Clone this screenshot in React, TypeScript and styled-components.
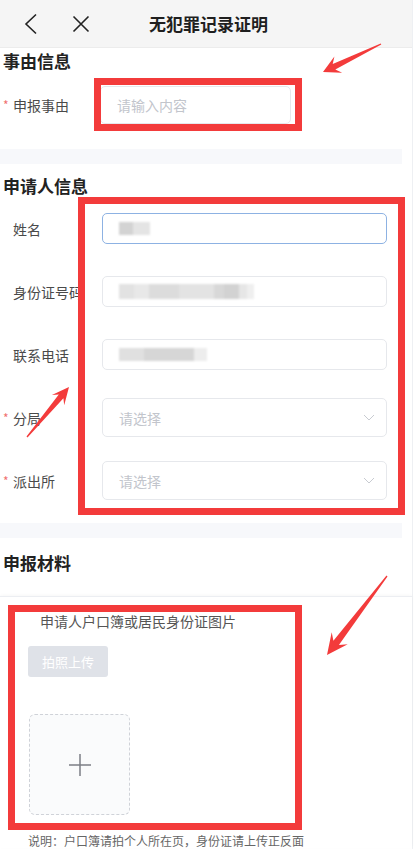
import React from 'react';
import styled, { createGlobalStyle } from 'styled-components';

const GlobalStyle = createGlobalStyle`
    html, body {
        margin: 0;
        padding: 0;
        background: #fff;
        font-family: "Noto Sans CJK SC", "Noto Sans", sans-serif;
        color: #333;
    }
`;

const Page = styled.div`
    position: relative;
    width: 417px;
    height: 849px;
    overflow: hidden;
    background: #fff;
`;

const Shell = styled.div`
    width: 412px;
    min-height: 849px;
    border-right: 1px solid #eef0f3;
`;

const NavBar = styled.div`
    height: 47px;
    background: #f5f5f5;
    border-bottom: 1px solid #ececec;
    display: flex;
    align-items: center;
    position: relative;
`;

const NavIcons = styled.div`
    display: flex;
    align-items: center;
    gap: 34px;
    padding-left: 24px;
`;

const NavTitle = styled.div`
    position: absolute;
    left: 0;
    right: -5px;
    text-align: center;
    font-size: 17px;
    font-weight: 600;
    color: #1f1f1f;
    pointer-events: none;
`;

const Section = styled.section<{ $bottom: number }>`
    padding-bottom: ${p => p.$bottom}px;
`;

const SectionTitle = styled.h2<{ $top: number; $line: number }>`
    margin: 0;
    padding: ${p => p.$top}px 0 0 3px;
    line-height: ${p => p.$line}px;
    font-size: 17px;
    font-weight: 700;
    color: #222;
`;

const Band = styled.div`
    width: 402px;
    height: 15px;
    background: #f7f8fb;
`;

const Row = styled.div<{ $h: number }>`
    height: ${p => p.$h}px;
    display: flex;
    align-items: center;
`;

const Label = styled.div<{ $w: number }>`
    width: ${p => p.$w}px;
    flex-shrink: 0;
    padding-left: 13px;
    box-sizing: border-box;
    font-size: 14px;
    color: #4a4a4a;
    white-space: nowrap;
    overflow: hidden;
`;

const Star = styled.span`
    display: inline-block;
    width: 10px;
    margin-left: -10px;
    color: #f07070;
    font-size: 12px;
    vertical-align: 1px;
`;

const Field = styled.div<{ $w: number; $h: number; $focus?: boolean }>`
    width: ${p => p.$w}px;
    height: ${p => p.$h}px;
    box-sizing: border-box;
    border: 1px solid ${p => (p.$focus ? '#8db2e3' : '#e6e8ec')};
    border-radius: 5px;
    display: flex;
    align-items: center;
    padding: 0 11px 0 16px;
    font-size: 14px;
    background: #fff;
`;

const Placeholder = styled.span`
    color: #c2c5cc;
    flex: 1;
`;

const Redaction = styled.div`
    display: flex;
    filter: blur(1px);
`;

const Blot = styled.span<{ $w: number; $shade: string; $h?: number }>`
    display: block;
    width: ${p => p.$w}px;
    height: ${p => p.$h ?? 14}px;
    background: ${p => p.$shade};
`;

const Card = styled.div`
    margin-top: 21px;
    border-top: 1px solid #eceef2;
    box-shadow: 0 -1px 3px rgba(0, 0, 0, 0.03);
    padding: 14px 0 0 28px;
    display: flex;
    flex-direction: column;
    align-items: flex-start;
`;

const MaterialLabel = styled.div`
    padding-left: 12px;
    line-height: 20px;
    font-size: 14px;
    color: #555;
`;

const UploadButton = styled.button`
    margin-top: 15px;
    width: 80px;
    height: 31px;
    border: none;
    border-radius: 3px;
    background: #dfe2e8;
    color: #fff;
    font-family: inherit;
    font-size: 13px;
    padding: 0;
`;

const UploadBox = styled.div`
    margin-top: 37px;
    margin-left: 1px;
    width: 101px;
    height: 101px;
    box-sizing: border-box;
    border: 1px dashed #cfd2d8;
    border-radius: 6px;
    background: #fafbfc;
    display: flex;
    align-items: center;
    justify-content: center;
`;

const Note = styled.div`
    margin-top: 19px;
    line-height: 14px;
    font-size: 12px;
    color: #666;
`;

const Mark = styled.div<{ $x: number; $y: number; $w: number; $h: number; $b: number }>`
    position: absolute;
    left: ${p => p.$x}px;
    top: ${p => p.$y}px;
    width: ${p => p.$w}px;
    height: ${p => p.$h}px;
    box-sizing: border-box;
    border: ${p => p.$b}px solid #f33b3b;
    pointer-events: none;
`;

const Overlay = styled.svg`
    position: absolute;
    left: 0;
    top: 0;
    pointer-events: none;
`;

type Pt = [number, number];

const arrowPoints = (tail: Pt, tip: Pt, headLen: number, headHalf: number, neckHalf: number) => {
    const dx = tip[0] - tail[0];
    const dy = tip[1] - tail[1];
    const len = Math.hypot(dx, dy);
    const ux = dx / len;
    const uy = dy / len;
    const nx = -uy;
    const ny = ux;
    const base: Pt = [tip[0] - ux * headLen, tip[1] - uy * headLen];
    const neck: Pt = [tip[0] - ux * headLen * 0.72, tip[1] - uy * headLen * 0.72];
    const pts: Pt[] = [
        [tail[0] + nx * 0.6, tail[1] + ny * 0.6],
        [neck[0] + nx * neckHalf, neck[1] + ny * neckHalf],
        [base[0] + nx * headHalf, base[1] + ny * headHalf],
        tip,
        [base[0] - nx * headHalf, base[1] - ny * headHalf],
        [neck[0] - nx * neckHalf, neck[1] - ny * neckHalf],
        [tail[0] - nx * 0.6, tail[1] - ny * 0.6],
    ];
    return pts.map(p => `${p[0].toFixed(1)},${p[1].toFixed(1)}`).join(' ');
};

const Chevron = () => (
    <svg width="12" height="7" viewBox="0 0 12 7">
        <path d="M1 1l5 5 5-5" fill="none" stroke="#c8cbd1" strokeWidth="1" />
    </svg>
);

const BackIcon = () => (
    <svg width="14" height="22" viewBox="0 0 14 22">
        <path d="M12 1.5L2 11l10 9.5" fill="none" stroke="#222" strokeWidth="1.6" />
    </svg>
);

const CloseIcon = () => (
    <svg width="18" height="18" viewBox="0 0 18 18">
        <path d="M1.5 1.5l15 15M16.5 1.5l-15 15" fill="none" stroke="#222" strokeWidth="1.6" />
    </svg>
);

const PlusIcon = () => (
    <svg width="24" height="24" viewBox="0 0 24 24">
        <path d="M12 1v22M1 12h22" fill="none" stroke="#7c7f85" strokeWidth="1.5" />
    </svg>
);

const applicantRows = [
    { label: '姓名', required: false, blots: [[14, '#d3d3d3'], [17, '#e4e4e4']] },
    {
        label: '身份证号码',
        required: false,
        blots: [[15, '#e2e2e2'], [15, '#e8e8e8'], [30, '#dcdcdc'], [35, '#e3e3e3'], [10, '#d8d8d8'], [15, '#d2d2d2'], [8, '#e6e6e6'], [7, '#efefef']],
    },
    { label: '联系电话', required: false, blots: [[25, '#e0e0e0'], [50, '#d6d6d6'], [13, '#ededed']] },
    { label: '分局', required: true, select: true },
    { label: '派出所', required: true, select: true },
] as { label: string; required: boolean; select?: boolean; blots?: [number, string][] }[];

export default function App() {
    return (
        <Page>
            <GlobalStyle />
            <Shell>
                <NavBar>
                    <NavIcons>
                        <BackIcon />
                        <CloseIcon />
                    </NavIcons>
                    <NavTitle>无犯罪记录证明</NavTitle>
                </NavBar>

                <Section $bottom={14}>
                    <SectionTitle $top={0} $line={26}>事由信息</SectionTitle>
                    <Row $h={61}>
                        <Label $w={100}>
                            <Star>*</Star>申报事由
                        </Label>
                        <Field $w={191} $h={38}>
                            <Placeholder>请输入内容</Placeholder>
                        </Field>
                    </Row>
                </Section>
                <Band />

                <Section $bottom={11}>
                    <SectionTitle $top={11} $line={22}>申请人信息</SectionTitle>
                    {applicantRows.map((row, i) => (
                        <Row $h={63} key={row.label}>
                            <Label $w={102}>
                                {row.required && <Star>*</Star>}
                                {row.label}
                            </Label>
                            <Field $w={285} $h={row.select ? 39 : 31} $focus={i === 0}>
                                {row.select ? (
                                    <>
                                        <Placeholder>请选择</Placeholder>
                                        <Chevron />
                                    </>
                                ) : (
                                    <Redaction>
                                        {row.blots!.map(([w, shade], j) => (
                                            <Blot key={j} $w={w} $shade={shade} $h={i === 1 ? 15 : 13} />
                                        ))}
                                    </Redaction>
                                )}
                            </Field>
                        </Row>
                    ))}
                </Section>
                <Band />

                <SectionTitle $top={13} $line={24}>申报材料</SectionTitle>
                <Card>
                    <MaterialLabel>申请人户口簿或居民身份证图片</MaterialLabel>
                    <UploadButton>拍照上传</UploadButton>
                    <UploadBox>
                        <PlusIcon />
                    </UploadBox>
                    <Note>说明：户口簿请拍个人所在页，身份证请上传正反面</Note>
                </Card>
            </Shell>

            <Mark $x={94} $y={78} $w={208} $h={53} $b={7} />
            <Mark $x={78} $y={197} $w={327} $h={318} $b={7} />
            <Mark $x={8} $y={605} $w={294} $h={225} $b={7} />

            <Overlay width="417" height="849" viewBox="0 0 417 849">
                <polygon points={arrowPoints([381, 44], [323, 72], 17, 9, 3)} fill="#f33b3b" />
                <polygon points={arrowPoints([27, 437], [69, 387], 17, 8, 3)} fill="#f33b3b" />
                <polygon points={arrowPoints([387, 576], [327, 655], 21, 10, 3.5)} fill="#f33b3b" />
            </Overlay>
        </Page>
    );
}
